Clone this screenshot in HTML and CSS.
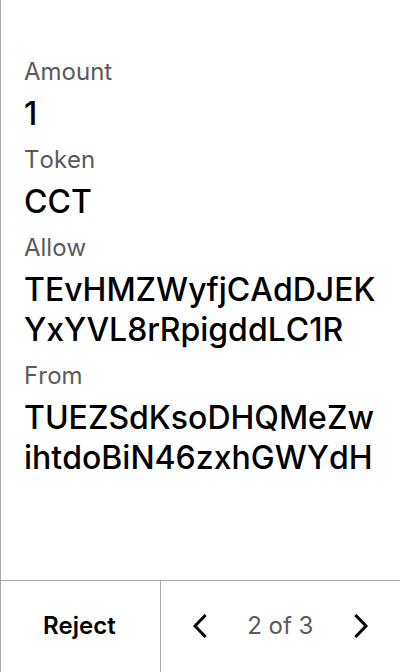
FILE: index.html
```html
<!DOCTYPE html>
<html lang="en">
<head>
<meta charset="utf-8">
<meta name="viewport" content="width=device-width, initial-scale=1">
<title>Review transaction</title>
<link rel="stylesheet" href="styles.css">
</head>
<body>
<main class="review">
  <dl class="fields">
    <div class="field"><dt>Amount</dt><dd>1</dd></div>
    <div class="field"><dt>Token</dt><dd>CCT</dd></div>
    <div class="field"><dt>Allow</dt><dd>TEvHMZWyfjCAdDJEK<wbr>YxYVL8rRpigddLC1R</dd></div>
    <div class="field"><dt>From</dt><dd>TUEZSdKsoDHQMeZw<wbr>ihtdoBiN46zxhGWYdH</dd></div>
  </dl>
</main>
<footer class="footer">
  <button class="reject" type="button">Reject</button>
  <nav class="pager" aria-label="Pages">
    <button class="arrow" type="button" aria-label="Previous page"><svg viewBox="0 0 14 24" width="14" height="24"><path d="M12.600 1 2 12l10.600 11"/></svg></button>
    <span class="page">2 of 3</span>
    <button class="arrow" type="button" aria-label="Next page"><svg viewBox="0 0 14 24" width="14" height="24"><path d="M1.400 1 12 12 1.400 23"/></svg></button>
  </nav>
</footer>
</body>
</html>
```
FILE: styles.css
```css
* {
  box-sizing: border-box;
}

body {
  display: flex;
  flex-direction: column;
  min-height: 100vh;
  margin: 0;
  border-left: 1px solid #a8a8a8;
  background: #fff;
  color: #000;
  font-family: Inter, sans-serif;
  font-kerning: none;
}

.review {
  flex: 1;
  padding: 56px 23px 24px;
}

.fields,
.fields dd {
  margin: 0;
}

.field {
  margin-bottom: 10px;
}

.field dt {
  margin-bottom: 6px;
  color: #5a5a5a;
  font-size: 24px;
  line-height: 32px;
}

.field dd {
  font-size: 32px;
  font-weight: 500;
  line-height: 40px;
  overflow-wrap: anywhere;
}

.footer {
  display: grid;
  grid-template-columns: 2fr 3fr;
  min-height: 92px;
  border-top: 1px solid #a8a8a8;
}

button {
  border: 0;
  background: none;
  color: inherit;
  font: inherit;
}

.reject {
  padding: 0 2px 2px 0;
  border-right: 1px solid #a8a8a8;
  font-size: 24px;
  font-weight: 600;
}

.pager {
  display: flex;
  align-items: center;
  justify-content: space-between;
  padding: 0 32px 2px;
}

.arrow {
  display: flex;
  padding: 0;
}

.arrow path {
  fill: none;
  stroke: #000;
  stroke-width: 3;
}

.page {
  color: #5a5a5a;
  font-size: 24px;
}
```
